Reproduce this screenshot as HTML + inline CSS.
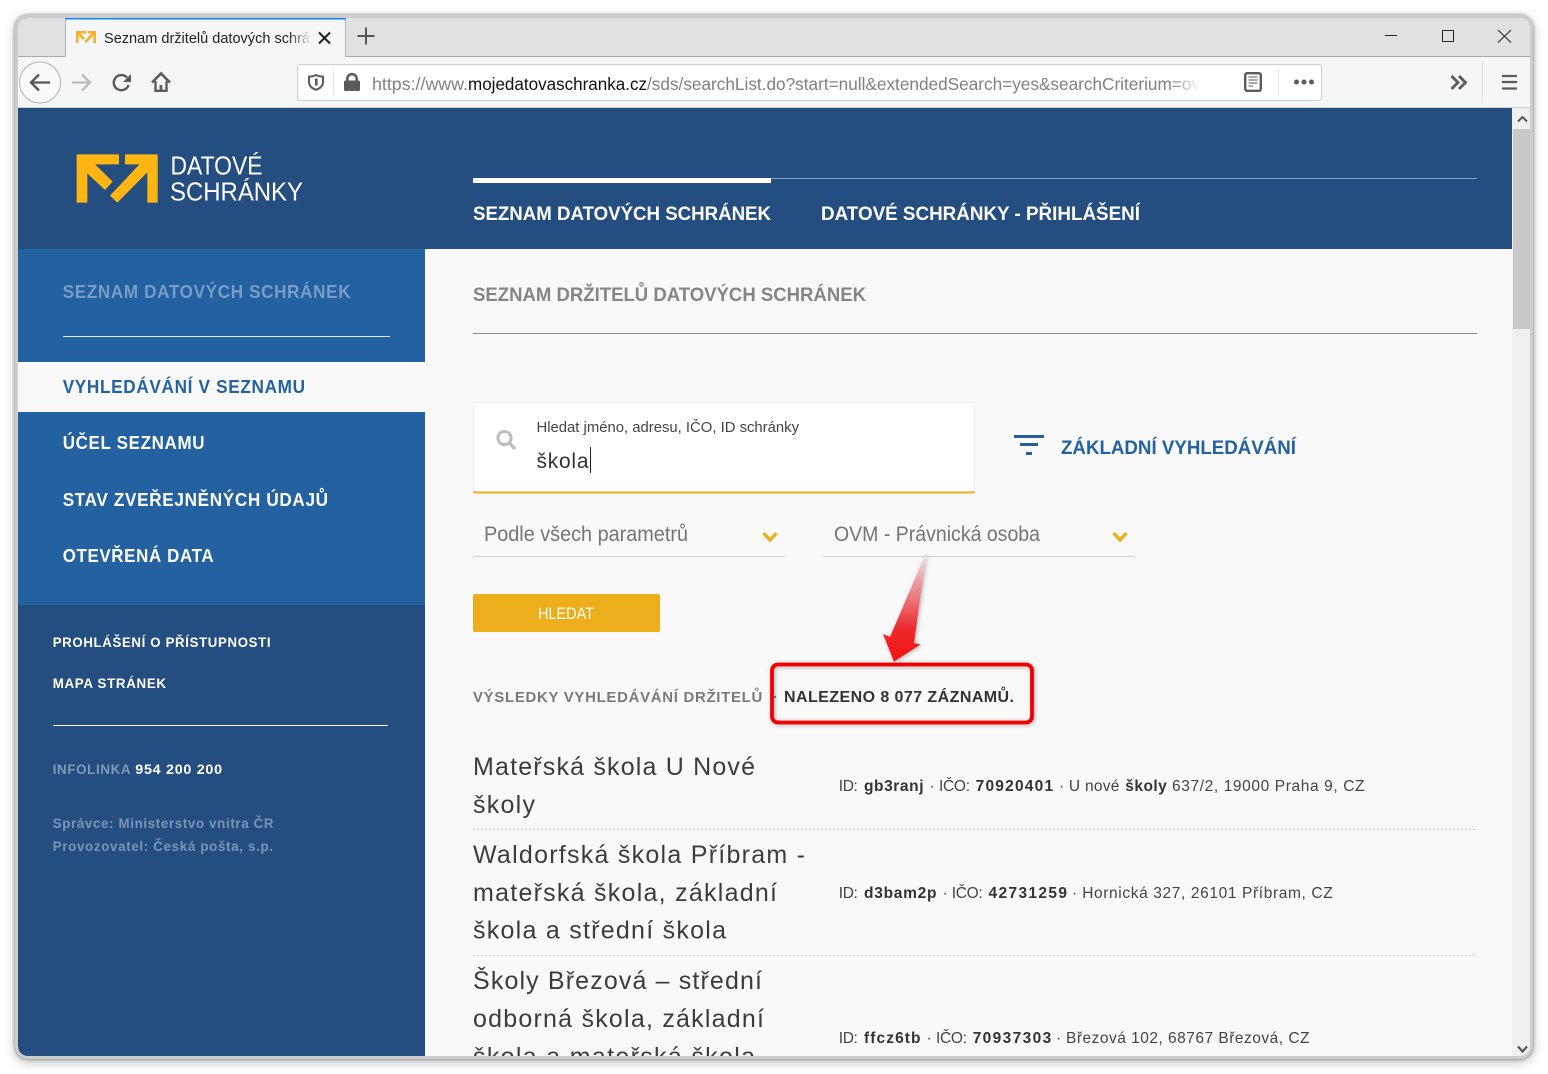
<!DOCTYPE html>
<html lang="cs"><head><meta charset="utf-8"><title>Seznam držitelů datových schránek</title>
<style>
html,body{margin:0;padding:0;background:#fff;width:1548px;height:1074px;overflow:hidden}
#f{position:absolute;left:15px;top:15px;width:1518px;height:1044px;border-radius:13px;background:#cdcdcd;box-shadow:0 0 3px rgba(40,40,40,.55),0 3px 10px 1px rgba(0,0,0,.22)}
svg{position:absolute;left:0;top:0}
text{font-family:"Liberation Sans",sans-serif;white-space:pre}
.b{font-weight:700}
.s{letter-spacing:.7px}
.d{font-size:15.5px;fill:#444}
.db{font-size:15.5px;fill:#333;font-weight:700}
.t{font-size:25px;fill:#3c3c3c}
.m{font-size:19px;font-weight:700;fill:#fff}
</style></head><body>
<div id="f"></div>
<svg width="1548" height="1074" viewBox="0 0 1548 1074" xmlns="http://www.w3.org/2000/svg">
<defs>
<clipPath id="w"><rect x="18" y="18" width="1512" height="1038" rx="10"/></clipPath>
<clipPath id="cnt"><rect x="425" y="108" width="1087" height="948"/></clipPath>
<linearGradient id="fa" x1="0" x2="1" y1="0" y2="0"><stop offset="0" stop-color="#f5f6f8" stop-opacity="0"/><stop offset="1" stop-color="#f5f6f8"/></linearGradient>
<linearGradient id="fu" x1="0" x2="1" y1="0" y2="0"><stop offset="0" stop-color="#fff" stop-opacity="0"/><stop offset="1" stop-color="#fff"/></linearGradient>
<linearGradient id="ar" x1="0" x2="0" y1="0" y2="1"><stop offset="0" stop-color="#f3e6e6"/><stop offset=".35" stop-color="#e88a8e"/><stop offset=".7" stop-color="#ee2a2e"/><stop offset="1" stop-color="#f50f0f"/></linearGradient>
<filter id="sh" x="-30%" y="-30%" width="160%" height="160%"><feDropShadow dx="1" dy="1" stdDeviation="2" flood-color="#000" flood-opacity=".3"/></filter>
</defs>
<g clip-path="url(#w)">
<!-- tab strip -->
<rect x="18" y="18" width="1512" height="39" fill="#e0e1e3"/>
<rect x="18" y="56" width="1512" height="1" fill="#a9a9aa"/>
<rect x="18" y="57" width="1512" height="50" fill="#f5f6f8"/>
<rect x="18" y="107" width="1512" height="1" fill="#cfcfd1"/>
<rect x="65" y="18" width="281" height="39" fill="#f5f6f8"/>
<rect x="65" y="18" width="1" height="39" fill="#b4b4b5"/>
<rect x="345" y="18" width="1" height="39" fill="#b4b4b5"/>
<rect x="65" y="18" width="281" height="1.5" fill="#0a84ff"/>
<g transform="translate(69.4 25) scale(.0823)" fill="#f4b32c"><polygon points="80,73 207,73 207,103 135,103 188,155 165,180 112,130 112,218 80,218"/><polygon points="225,73 323,73 323,218 292,218 292,127 202,218 180,197 268,103 225,103"/></g>
<text x="104" y="43" font-size="14.5" fill="#222" textLength="206" lengthAdjust="spacingAndGlyphs">Seznam držitelů datových schrá</text>
<rect x="288" y="28" width="24" height="20" fill="url(#fa)"/>
<path d="M319 32.5 L330 43.5 M330 32.5 L319 43.5" stroke="#222" stroke-width="2" fill="none"/>
<path d="M366 27.5 V44.5 M357.5 36 H374.5" stroke="#555" stroke-width="2" fill="none"/>
<path d="M1385 35.5 H1397" stroke="#222" stroke-width="1" fill="none"/>
<rect x="1442.5" y="30.5" width="11" height="11" stroke="#222" stroke-width="1" fill="none"/>
<path d="M1498 30 L1511 42.5 M1511 30 L1498 42.5" stroke="#222" stroke-width="1" fill="none"/>
<!-- toolbar -->
<circle cx="40" cy="82.5" r="20.5" fill="#fafafb" stroke="#b3b3b3"/>
<path d="M31 82.5 H50 M39 74.5 L31 82.5 L39 90.5" stroke="#555" stroke-width="2.3" fill="none"/>
<path d="M72 82.5 H90 M82 74.5 L90 82.5 L82 90.5" stroke="#bcbcbc" stroke-width="2.3" fill="none"/>
<path d="M127 77.5 A7.6 7.6 0 1 0 128.6 85" stroke="#5b5b5b" stroke-width="2.4" fill="none"/>
<polygon points="131,74 131,82 123,82" fill="#5b5b5b"/>
<path d="M152 82.5 L161 73.5 L170 82.5" stroke="#5b5b5b" stroke-width="2.6" fill="none"/>
<path d="M155.5 81 V90.8 H166.5 V81" stroke="#5b5b5b" stroke-width="2.4" fill="none"/>
<rect x="159.6" y="85" width="2.8" height="6" fill="#5b5b5b"/>
<rect x="297.5" y="64.5" width="1024" height="36" rx="2" fill="#fff" stroke="#cfcfd1"/>
<path d="M316 75 C313.5 76.4 311.3 76.6 309 76.6 V82 C309 86 312 88.4 316 89.8 C320 88.4 323 86 323 82 V76.6 C320.7 76.6 318.5 76.4 316 75 Z" fill="none" stroke="#5b5b5b" stroke-width="2"/>
<rect x="315" y="78.5" width="2.6" height="7" fill="#5b5b5b"/>
<rect x="333" y="69" width="1" height="26" fill="#e8e8e8"/>
<rect x="344" y="80.5" width="16" height="10.5" rx="1.5" fill="#5b5b5b"/>
<path d="M347.3 81 V78.8 a4.7 4.7 0 0 1 9.4 0 V81" stroke="#5b5b5b" stroke-width="2.5" fill="none"/>
<text x="372" y="90" font-size="17.5" fill="#808080" textLength="96" lengthAdjust="spacingAndGlyphs">https://www.</text>
<text x="468" y="90" font-size="17.5" fill="#111" textLength="179" lengthAdjust="spacingAndGlyphs">mojedatovaschranka.cz</text>
<text x="647" y="90" font-size="17.5" fill="#808080" textLength="553" lengthAdjust="spacingAndGlyphs">/sds/searchList.do?start=null&amp;extendedSearch=yes&amp;searchCriterium=ov</text>
<rect x="1170" y="70" width="30" height="26" fill="url(#fu)"/>
<rect x="1200" y="70" width="30" height="26" fill="#fff"/>
<rect x="1245.2" y="73.2" width="15.6" height="17.6" rx="2" fill="none" stroke="#5b5b5b" stroke-width="2.4"/>
<path d="M1248.5 77 H1257.5 M1248.5 80 H1257.5 M1248.5 83 H1257.5 M1248.5 86 H1253" stroke="#777" stroke-width="1.3" fill="none"/>
<rect x="1278" y="70" width="1" height="26" fill="#e3e3e3"/>
<circle cx="1296.5" cy="82" r="2.5" fill="#5b5b5b"/><circle cx="1304" cy="82" r="2.5" fill="#5b5b5b"/><circle cx="1311.5" cy="82" r="2.5" fill="#5b5b5b"/>
<path d="M1451.5 76 L1458 82.5 L1451.5 89 M1459 76 L1465.5 82.5 L1459 89" stroke="#5b5b5b" stroke-width="2.8" fill="none"/>
<rect x="1482" y="61" width="1" height="42" fill="#e0e0e2"/>
<path d="M1502 76 H1517 M1502 82 H1517 M1502 88.5 H1517" stroke="#5b5b5b" stroke-width="2.2" fill="none"/>
<!-- page -->
<rect x="18" y="108" width="1494" height="948" fill="#f9f9f9"/>
<rect x="18" y="108" width="1494" height="141" fill="#244e7f"/>
<g transform="translate(50 130) scale(.33333)" fill="#ffb612"><polygon points="80,73 207,73 207,103 135,103 188,155 165,180 112,130 112,218 80,218"/><polygon points="225,73 323,73 323,218 292,218 292,127 202,218 180,197 268,103 225,103"/></g>
<text x="170.5" y="174.5" font-size="26" fill="#fff" textLength="92" lengthAdjust="spacingAndGlyphs">DATOVÉ</text>
<text x="170" y="200.5" font-size="26" fill="#fff" textLength="133" lengthAdjust="spacingAndGlyphs">SCHRÁNKY</text>
<rect x="771" y="178" width="706" height="1" fill="#8ea5c0"/>
<rect x="473" y="178" width="298" height="5" fill="#fff"/>
<text class="m" x="473" y="220" textLength="298" lengthAdjust="spacingAndGlyphs">SEZNAM DATOVÝCH SCHRÁNEK</text>
<text class="m" x="821" y="220" textLength="319" lengthAdjust="spacingAndGlyphs">DATOVÉ SCHRÁNKY - PŘIHLÁŠENÍ</text>
<!-- sidebar -->
<rect x="18" y="249" width="407" height="807" fill="#244e7f"/>
<rect x="18" y="249" width="407" height="356" fill="#2361a1"/>
<rect x="18" y="362" width="407" height="50" fill="#f9f9f9"/>
<text class="b s" x="62.7" y="298" font-size="18" fill="#7a9dc6" textLength="288.5" lengthAdjust="spacingAndGlyphs">SEZNAM DATOVÝCH SCHRÁNEK</text>
<rect x="63" y="336" width="327" height="1" fill="#e3e9f1"/>
<text class="b s" x="62.7" y="393" font-size="18" fill="#2361a1" textLength="243" lengthAdjust="spacingAndGlyphs">VYHLEDÁVÁNÍ V SEZNAMU</text>
<text class="b s" x="62.7" y="449" font-size="18" fill="#fff" textLength="142.5" lengthAdjust="spacingAndGlyphs">ÚČEL SEZNAMU</text>
<text class="b s" x="62.7" y="506" font-size="18" fill="#fff" textLength="266" lengthAdjust="spacingAndGlyphs">STAV ZVEŘEJNĚNÝCH ÚDAJŮ</text>
<text class="b s" x="62.7" y="562" font-size="18" fill="#fff" textLength="151.5" lengthAdjust="spacingAndGlyphs">OTEVŘENÁ DATA</text>
<text class="b s" x="52.7" y="647" font-size="14" fill="#fff" textLength="218.5" lengthAdjust="spacingAndGlyphs">PROHLÁŠENÍ O PŘÍSTUPNOSTI</text>
<text class="b s" x="52.7" y="688" font-size="14" fill="#fff" textLength="114" lengthAdjust="spacingAndGlyphs">MAPA STRÁNEK</text>
<rect x="53" y="725" width="335" height="1" fill="#fff"/>
<text class="b s" x="52.7" y="774" font-size="14" fill="#8299b8" textLength="78.5" lengthAdjust="spacingAndGlyphs">INFOLINKA</text>
<text class="b s" x="135.3" y="774" font-size="14" fill="#fff" textLength="87.5" lengthAdjust="spacingAndGlyphs">954 200 200</text>
<text class="b s" x="52.7" y="828" font-size="14" fill="#7a94b5" textLength="221.5" lengthAdjust="spacingAndGlyphs">Správce: Ministerstvo vnitra ČR</text>
<text class="b s" x="52.7" y="851" font-size="14" fill="#7a94b5" textLength="221" lengthAdjust="spacingAndGlyphs">Provozovatel: Česká pošta, s.p.</text>
<!-- main -->
<text class="b" x="473" y="301" font-size="19.5" fill="#858585" textLength="393" lengthAdjust="spacingAndGlyphs">SEZNAM DRŽITELŮ DATOVÝCH SCHRÁNEK</text>
<rect x="473" y="333" width="1004" height="1" fill="#8a8a8a"/>
<rect x="473.5" y="402.5" width="501" height="90.5" rx="3" fill="#fff" stroke="#ececec"/>
<path d="M473.5 491.5 Q474 492.5 477 492.5 H971 Q974 492.5 974.5 491.5" stroke="#ecae1b" stroke-width="2" fill="none"/>
<circle cx="504.5" cy="438" r="6.6" fill="none" stroke="#bdbdbd" stroke-width="3"/>
<path d="M509.5 443 L515 449" stroke="#bdbdbd" stroke-width="3.4"/>
<text x="536.5" y="432" font-size="15" fill="#444" textLength="262.5" lengthAdjust="spacingAndGlyphs">Hledat jméno, adresu, IČO, ID schránky</text>
<text x="536.5" y="468" font-size="21" fill="#333" textLength="52">škola</text>
<rect x="590" y="447" width="1" height="26" fill="#222"/>
<path d="M1014 436.5 H1044" stroke="#2361a1" stroke-width="3"/>
<path d="M1020 444.5 H1038" stroke="#2361a1" stroke-width="3"/>
<path d="M1026 453.5 H1032" stroke="#2361a1" stroke-width="3"/>
<text class="b" x="1061" y="454" font-size="19" fill="#2361a1" textLength="235" lengthAdjust="spacingAndGlyphs">ZÁKLADNÍ VYHLEDÁVÁNÍ</text>
<text x="484" y="541" font-size="21" fill="#757575" textLength="204" lengthAdjust="spacingAndGlyphs">Podle všech parametrů</text>
<path d="M763.5 533 L770 540 L776.5 533" stroke="#ecae1b" stroke-width="3.4" fill="none"/>
<rect x="473" y="556" width="312" height="1" fill="#d0d0d0"/>
<text x="834" y="541" font-size="21" fill="#757575" textLength="206" lengthAdjust="spacingAndGlyphs">OVM - Právnická osoba</text>
<path d="M1113.5 533 L1120 540 L1126.5 533" stroke="#ecae1b" stroke-width="3.4" fill="none"/>
<rect x="823" y="556" width="312" height="1" fill="#d0d0d0"/>
<rect x="473" y="594" width="187" height="38" rx="2" fill="#ecae1b"/>
<text x="538" y="619" font-size="17" fill="#fff" textLength="56" lengthAdjust="spacingAndGlyphs">HLEDAT</text>
<text class="b s" x="473" y="702" font-size="14.5" fill="#7a7a7a" textLength="290" lengthAdjust="spacingAndGlyphs">VÝSLEDKY VYHLEDÁVÁNÍ DRŽITELŮ</text>
<text class="b" x="773" y="702" font-size="14.5" fill="#7a7a7a">·</text>
<text class="b" x="784" y="702" font-size="16" fill="#333" textLength="230">NALEZENO 8 077 ZÁZNAMŮ.</text>
<rect x="772" y="664.5" width="260" height="58" rx="6" fill="none" stroke="#f20000" stroke-width="3.8" filter="url(#sh)"/>
<polygon points="926.5,552 914,643 920.5,644.5 894,661.5 883,634 890,637" fill="url(#ar)" filter="url(#sh)"/>
<!-- results -->
<g clip-path="url(#cnt)">
<text class="t" x="473" y="775" textLength="282">Mateřská škola U Nové</text>
<text class="t" x="473" y="813" textLength="62">školy</text>
<line x1="473" y1="829.5" x2="1477" y2="829.5" stroke="#c8c8c8" stroke-dasharray="2 2"/>
<text class="t" x="473" y="863" textLength="332">Waldorfská škola Příbram -</text>
<text class="t" x="473" y="901" textLength="304">mateřská škola, základní</text>
<text class="t" x="473" y="938.5" textLength="253">škola a střední škola</text>
<line x1="473" y1="955.5" x2="1477" y2="955.5" stroke="#c8c8c8" stroke-dasharray="2 2"/>
<text class="t" x="473" y="989" textLength="289">Školy Březová – střední</text>
<text class="t" x="473" y="1027" textLength="291">odborná škola, základní</text>
<text class="t" x="473" y="1065" textLength="282">škola a mateřská škola</text>

<text class="d" x="838.8" y="791" textLength="19">ID:</text>
<text class="db" x="864" y="791" textLength="59.5">gb3ranj</text>
<text class="d" x="929.5" y="791">·</text>
<text class="d" x="939" y="791" textLength="31">IČO:</text>
<text class="db" x="975.6" y="791" textLength="77.5">70920401</text>
<text class="d" x="1059" y="791">·</text>
<text class="d" x="1068.9" y="791" textLength="50.5">U nové</text>
<text class="db" x="1125.3" y="791" textLength="41.5">školy</text>
<text class="d" x="1172" y="791" textLength="192.5">637/2, 19000 Praha 9, CZ</text>

<text class="d" x="838.8" y="898" textLength="19">ID:</text>
<text class="db" x="864" y="898" textLength="72.5">d3bam2p</text>
<text class="d" x="942.5" y="898">·</text>
<text class="d" x="951.7" y="898" textLength="31">IČO:</text>
<text class="db" x="988.5" y="898" textLength="78.5">42731259</text>
<text class="d" x="1072" y="898">·</text>
<text class="d" x="1082.2" y="898" textLength="250.5">Hornická 327, 26101 Příbram, CZ</text>

<text class="d" x="838.8" y="1043" textLength="19">ID:</text>
<text class="db" x="864" y="1043" textLength="56.5">ffcz6tb</text>
<text class="d" x="926.5" y="1043">·</text>
<text class="d" x="936" y="1043" textLength="31">IČO:</text>
<text class="db" x="972.7" y="1043" textLength="78.5">70937303</text>
<text class="d" x="1056" y="1043">·</text>
<text class="d" x="1066" y="1043" textLength="243.5">Březová 102, 68767 Březová, CZ</text>
</g>
<!-- scrollbar -->
<rect x="1512" y="108" width="18" height="948" fill="#f0f0f0"/>
<rect x="1513" y="129" width="17" height="200" fill="#c9c9c9"/>
<path d="M1518 121.5 L1522.5 117 L1527 121.5" stroke="#555" stroke-width="2" fill="none"/>
<path d="M1518 1046.5 L1522.5 1051.5 L1527 1046.5" stroke="#555" stroke-width="2.2" fill="none"/>
</g>
</svg>
</body></html>
